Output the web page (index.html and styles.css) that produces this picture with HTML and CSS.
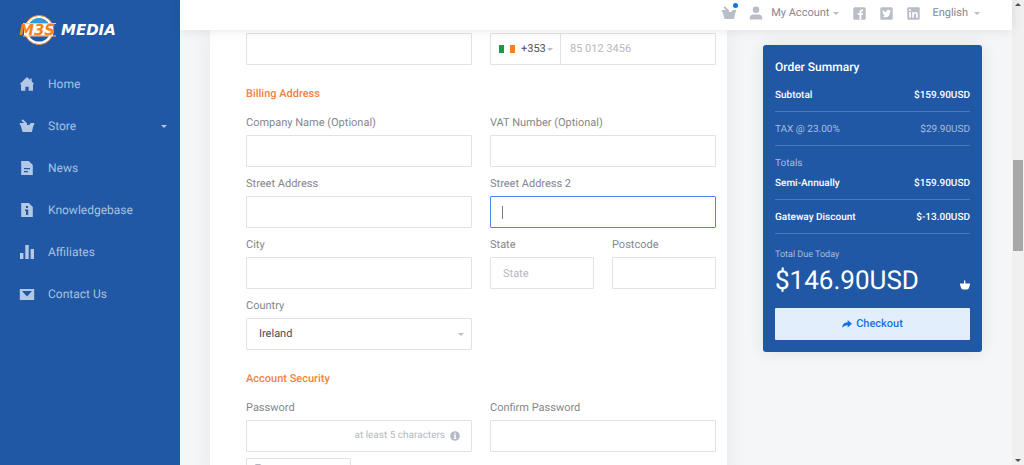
FILE: index.html
```html
<!DOCTYPE html>
<html lang="en">
<head>
<meta charset="utf-8">
<meta name="viewport" content="width=device-width, initial-scale=1">
<title>M3S Media - Checkout</title>
<link rel="stylesheet" href="styles.css">
</head>
<body>
<div class="app">
  <aside class="sidebar">
    <a class="logo" href="#" aria-label="M3S Media">
      <svg width="110" height="34" viewBox="0 0 110 34">
        <circle cx="23" cy="17" r="13" fill="#2058a6" stroke="#fff" stroke-width="3"/>
        <circle cx="23" cy="17" r="14.500" fill="none" stroke="#f08a3c" stroke-width="1"/>
        <path d="M13.500 10.500a11 11 0 0 1 19 0z" fill="#2f9bd8"/>
        <path d="M7 10.500h33M7 23h33" stroke="#ffc48a" stroke-width="1"/>
        <path d="M8 11h29v11.500H8z" fill="#fff"/>
        <text class="logo-mark" x="3" y="22">M3S</text>
        <text class="logo-name" x="45" y="22">MEDIA</text>
      </svg>
    </a>
    <nav class="menu">
      <a class="menu-item" href="#">
        <svg class="menu-icon" viewBox="0 0 16 16"><path d="M8 1L.6 8.300H2V14.700h4.400v-4h3.200v4H14V8.300h1.400L12.700 5.500V2.500h-1.500V4z"/></svg>
        <span>Home</span>
      </a>
      <a class="menu-item" href="#">
        <svg class="menu-icon" viewBox="0 0 16 16"><path d="M.8 5h4.400L2.400 2.700 3.800 1.200 8 5.200v1.900h2L12 5h3.200v1.800l-.8.800-1.500 6.400H3.600L1.700 7.600.8 6.800z"/></svg>
        <span>Store</span>
        <i class="caret"></i>
      </a>
      <a class="menu-item" href="#">
        <svg class="menu-icon" viewBox="0 0 16 16"><path fill-rule="evenodd" d="M2.200 1h7.600l4 4v10H2.200zM5 8v1.200h6V8zm0 3v1.200h4V11z"/></svg>
        <span>News</span>
      </a>
      <a class="menu-item" href="#">
        <svg class="menu-icon" viewBox="0 0 16 16"><path fill-rule="evenodd" d="M2.200 1h7.600l4 4v10H2.200zM7 4v2h2V4zM6 7.500V9h1v4h2.200V7.500z"/></svg>
        <span>Knowledgebase</span>
      </a>
      <a class="menu-item" href="#">
        <svg class="menu-icon" viewBox="0 0 16 16"><path d="M1 9h3.400v6H1zm5.300-8h3.400v14H6.300zm5.300 4H15v10h-3.400z"/></svg>
        <span>Affiliates</span>
      </a>
      <a class="menu-item" href="#">
        <svg class="menu-icon" viewBox="0 0 16 16"><path fill-rule="evenodd" d="M.8 3h14.400v11H.8zM3 5l5 5.500L13 5z"/></svg>
        <span>Contact Us</span>
      </a>
    </nav>
  </aside>

  <main class="main">
    <header class="topbar">
      <a class="cart" href="#" aria-label="Cart">
        <svg width="16" height="16" viewBox="0 0 16 16"><path d="M.8 5h4.400L2.400 2.700 3.800 1.200 8 5.200v1.900h2L12 5h3.200v1.800l-.8.800-1.500 6.400H3.600L1.700 7.600.8 6.800z"/></svg>
        <i class="cart-dot"></i>
      </a>
      <a class="account" href="#">
        <svg width="14" height="14" viewBox="0 0 14 14"><circle cx="7" cy="3.700" r="3.300"/><path d="M.8 13.600v-2.400Q1.200 8.800 4 8.600h6q2.800.2 3.200 2.600v2.400z"/></svg>
        <span>My Account</span>
        <i class="caret"></i>
      </a>
      <div class="social">
        <a href="#" aria-label="Facebook"><svg width="13" height="13" viewBox="0 0 13 13"><rect x=".3" y=".3" width="12.400" height="12.400" rx="1.500"/><path class="cut" d="M6.400 12.700V8H4.800V6.200h1.600V4.800Q6.500 2.600 8.800 2.600h1.300v1.700H9.200q-.9 0-.9.800v1.100h1.800L9.800 8H8.300v4.700z"/></svg></a>
        <a href="#" aria-label="Twitter"><svg width="13" height="13" viewBox="0 0 13 13"><rect x=".3" y=".3" width="12.400" height="12.400" rx="1.500"/><path class="cut" d="M2.600 3.200Q4.300 5 6.400 5q-.2-2.200 1.800-2.300.8 0 1.300.6l1.200-.4-.6 1 .8-.2-.8 1Q10 10 5.400 10.300q-1.700 0-3-.8 1.600.1 2.600-.8-1.300-.2-1.700-1.200l.7-.1Q2.700 7 2.600 5.500l.8.200Q2.100 4.700 2.600 3.200z"/></svg></a>
        <a href="#" aria-label="LinkedIn"><svg width="13" height="13" viewBox="0 0 13 13"><rect x=".3" y=".3" width="12.400" height="12.400" rx="1"/><path class="cut" d="M2.200 5h1.700v5.700H2.200zM2.200 2.300h1.700V4H2.200zM5.200 5h1.600v.8Q8 4.600 9.500 5.100q1.300.4 1.300 2.300v3.300H9.100V7.800q0-1.400-1.100-1.300-1.200.1-1.200 1.400v2.800H5.200z"/></svg></a>
      </div>
      <a class="language" href="#"><span>English</span><i class="caret"></i></a>
    </header>

    <div class="content">
      <form class="card">
        <div class="row">
          <input class="input" type="text" aria-label="Email address">
          <div class="phone">
            <button class="dial" type="button"><i class="flag"></i><span>+353</span><i class="caret"></i></button>
            <input class="phone-input" type="tel" placeholder="85 012 3456" aria-label="Phone number">
          </div>
        </div>

        <h2 class="section-title">Billing Address</h2>
        <div class="rows">
          <div class="row">
            <div class="field"><label for="company">Company Name (Optional)</label><input class="input" id="company" type="text"></div>
            <div class="field"><label for="vat">VAT Number (Optional)</label><input class="input" id="vat" type="text"></div>
          </div>
          <div class="row">
            <div class="field"><label for="street1">Street Address</label><input class="input" id="street1" type="text"></div>
            <div class="field"><label for="street2">Street Address 2</label>
              <div class="input-wrap"><input class="input active" id="street2" type="text"><i class="cursor"></i></div>
            </div>
          </div>
          <div class="row">
            <div class="field"><label for="city">City</label><input class="input" id="city" type="text"></div>
            <div class="row">
              <div class="field"><label for="state">State</label><input class="input" id="state" type="text" placeholder="State"></div>
              <div class="field"><label for="postcode">Postcode</label><input class="input" id="postcode" type="text"></div>
            </div>
          </div>
          <div class="row">
            <div class="field"><label for="country">Country</label>
              <div class="input-wrap"><select class="input" id="country"><option>Ireland</option></select><i class="caret select-caret"></i></div>
            </div>
          </div>
        </div>

        <h2 class="section-title">Account Security</h2>
        <div class="row">
          <div class="field"><label for="password">Password</label>
            <div class="input-wrap">
              <input class="input" id="password" type="password">
              <span class="hint">at least 5 characters
                <svg width="10" height="10" viewBox="0 0 10 10"><circle cx="5" cy="5" r="4.800" fill="#b4b9c4"/><path d="M4.300 1.800h1.500v1.400H4.300zM3.700 4.100h2.100v3h.7v1H3.600v-1h.8v-2h-.7z" fill="#fff"/></svg>
              </span>
            </div>
          </div>
          <div class="field"><label for="confirm">Confirm Password</label><input class="input" id="confirm" type="password"></div>
        </div>
        <button class="generate" type="button" aria-label="Generate password">
          <svg width="10" height="12" viewBox="0 0 10 12"><rect x="2" y=".5" width="6" height="10" rx="1" fill="none" stroke="#b4b9c4"/></svg>
        </button>
      </form>

      <section class="summary">
        <h2 class="summary-title">Order Summary</h2>
        <dl class="line strong"><dt>Subtotal</dt><dd>$159.90USD</dd></dl>
        <dl class="line"><dt>TAX @ 23.00%</dt><dd>$29.90USD</dd></dl>
        <p class="totals">Totals</p>
        <dl class="line strong"><dt>Semi-Annually</dt><dd>$159.90USD</dd></dl>
        <dl class="line strong"><dt>Gateway Discount</dt><dd>$-13.00USD</dd></dl>
        <p class="due">Total Due Today</p>
        <div class="amount"><span>$146.90USD</span>
          <svg width="10" height="10" viewBox="0 0 10 10"><path fill="#fff" d="M0 3.500h4V.5h1.300v3H10v1.200q-.5 1.400-1 3Q8.500 9.500 7 9.500H3Q1.500 9.500 1 7.700q-.4-1.600-1-3z"/></svg>
        </div>
        <button class="checkout" type="button">
          <svg width="10" height="10" viewBox="0 0 10 10"><path fill="#1273e6" d="M5.700 1L10 4.800 5.700 8.500V6.300Q2.400 6.100.3 8.800.2 3.500 5.700 3.200z"/></svg>
          Checkout
        </button>
      </section>
    </div>
  </main>

  <div class="scrollbar" aria-hidden="true">
    <i class="arrow up"></i>
    <div class="track"><div class="thumb"></div></div>
    <i class="arrow down"></i>
  </div>
</div>
</body>
</html>
```
FILE: styles.css
```css
* { box-sizing: border-box; }

body {
  margin: 0;
  font: 11px/16px Roboto, "Liberation Sans", sans-serif;
  text-rendering: geometricPrecision;
  color: #85878f;
  background: #f5f6f8;
}

a { color: inherit; text-decoration: none; }
svg { display: block; flex: none; }
h2, p, dl, dd { margin: 0; }
input, select, button { font: inherit; text-rendering: inherit; border-radius: 0; }

.app { display: flex; height: 100vh; overflow: hidden; }

/* Sidebar */
.sidebar { flex: none; width: 180px; background: #2058a6; }
.logo { display: block; padding: 13px 0 0 16px; }
.logo-mark, .logo-name {
  font-family: "DejaVu Sans", sans-serif;
  font-size: 15px;
  font-weight: bold;
  font-style: italic;
}
.logo-mark { fill: #f58220; }
.logo-name { fill: #fff; }
.menu { padding-top: 16px; }
.menu-item {
  display: flex;
  align-items: center;
  gap: 13px;
  height: 42px;
  padding: 0 13px 0 19px;
  font-size: 12px;
  color: #a9c0e0;
}
.menu-icon { width: 16px; height: 16px; fill: #b4c8e5; }

.caret {
  flex: none;
  width: 0;
  height: 0;
  border: 3px solid transparent;
  border-top-color: #b9bdc6;
  border-bottom: 0;
}
.menu-item .caret { margin-left: auto; border-top-color: #b4c8e5; }

/* Top bar */
.main { flex: 1; min-width: 0; }
.topbar {
  position: relative;
  z-index: 1;
  display: flex;
  justify-content: flex-end;
  align-items: center;
  height: 30px;
  padding: 0 32px 4px 0;
  background: #fff;
  box-shadow: 0 0 12px rgba(40, 50, 70, .12);
}
.topbar svg { fill: #b9bdc6; }
.topbar .cut { fill: #fff; }
.cart { position: relative; margin-right: 12px; }
.cart-dot {
  position: absolute;
  top: -2px;
  right: -1px;
  width: 5px;
  height: 5px;
  border-radius: 50%;
  background: #1273e6;
}
.account { display: flex; align-items: center; gap: 4px; }
.account svg { margin-right: 4px; }
.social { display: flex; gap: 14px; margin: 0 12px 0 14px; }
.language { display: flex; align-items: center; gap: 6px; }

/* Checkout form */
.content {
  display: grid;
  grid-template-columns: 1fr 219px;
  gap: 36px;
  align-items: start;
  padding: 0 30px;
}
.card {
  min-height: calc(100vh - 30px);
  padding: 3px 11px 0 36px;
  background: #fff;
  box-shadow: 0 0 20px rgba(40, 50, 70, .08);
}
.rows { display: grid; gap: 9px; }
.row { display: grid; grid-template-columns: repeat(2, minmax(0, 1fr)); gap: 18px; }
.field { display: grid; gap: 4px; }
.section-title {
  margin: 21px 0 13px;
  font-size: 11px;
  font-weight: 500;
  color: #f5823c;
}
.input {
  display: block;
  width: 100%;
  height: 32px;
  padding: 0 12px;
  border: 1px solid #e0e2e5;
  border-radius: 1px;
  outline: 0;
  background: #fff;
  color: #4b4e57;
  appearance: none;
}
.input.active { border-color: #4a86ee; }
::placeholder { color: #b4b9c1; opacity: 1; }
.input-wrap { position: relative; }
.cursor {
  position: absolute;
  top: 10px;
  left: 12px;
  width: 1px;
  height: 13px;
  background: #777b84;
}
.select-caret { position: absolute; top: 15px; right: 8px; }
.hint {
  position: absolute;
  top: 8px;
  right: 12px;
  display: flex;
  align-items: center;
  gap: 5px;
  font-size: 10px;
  color: #b4b9c1;
}
.phone {
  display: flex;
  height: 32px;
  border: 1px solid #e0e2e5;
  border-radius: 1px;
}
.dial {
  display: flex;
  align-items: center;
  width: 70px;
  padding: 0 0 0 8px;
  border: 0;
  border-right: 1px solid #e0e2e5;
  background: #fff;
  color: #4b4e57;
}
.dial span { margin: 0 1px 0 6px; }
.flag {
  width: 16px;
  height: 8px;
  background: linear-gradient(90deg, #169b48 0 33%, #fff 33% 67%, #ff7f1e 67%);
}
.phone-input { flex: 1; min-width: 0; padding: 0 9px; border: 0; outline: 0; background: none; }
.generate {
  display: flex;
  align-items: center;
  width: 105px;
  height: 24px;
  margin-top: 6px;
  padding: 0 6px;
  border: 1px solid #e0e2e5;
  background: #fff;
}

/* Order summary */
.summary {
  margin-top: 15px;
  padding: 14px 12px 12px;
  border-radius: 3px;
  background: #2058a6;
  box-shadow: 0 0 16px rgba(40, 50, 70, .1);
  color: #a5bcde;
  font-size: 10px;
}
.summary-title { margin-bottom: 13px; font-size: 12px; font-weight: 500; color: #fff; }
.line {
  display: flex;
  justify-content: space-between;
  margin-bottom: 10px;
  padding-bottom: 7px;
  border-bottom: 1px solid #4a79ba;
}
.strong { font-weight: 500; color: #fff; }
.totals { margin-bottom: 4px; }
.due { margin-top: 13px; font-size: 9px; }
.amount {
  display: flex;
  justify-content: space-between;
  align-items: center;
  margin: 2px 0 11px;
  font-size: 26px;
  line-height: 32px;
  color: #fff;
}
.amount svg { margin-top: 8px; }
.checkout {
  display: flex;
  justify-content: center;
  align-items: center;
  gap: 4px;
  width: 100%;
  height: 32px;
  border: 0;
  border-radius: 1px;
  background: #e3eefc;
  color: #1273e6;
  font-size: 11px;
  font-weight: 500;
}

/* Scroll bar */
.scrollbar {
  flex: none;
  display: flex;
  flex-direction: column;
  justify-content: space-between;
  align-items: center;
  width: 12px;
  padding: 3px 0;
  background: #f0f0f0;
}
.track { flex: 1; width: 10px; padding-top: 154px; }
.thumb { height: 91px; background: #a8a8a8; }
.arrow { width: 0; height: 0; border: 3px solid transparent; }
.up { border-top: 0; border-bottom-color: #505050; }
.down { border-bottom: 0; border-top-color: #505050; }
```
